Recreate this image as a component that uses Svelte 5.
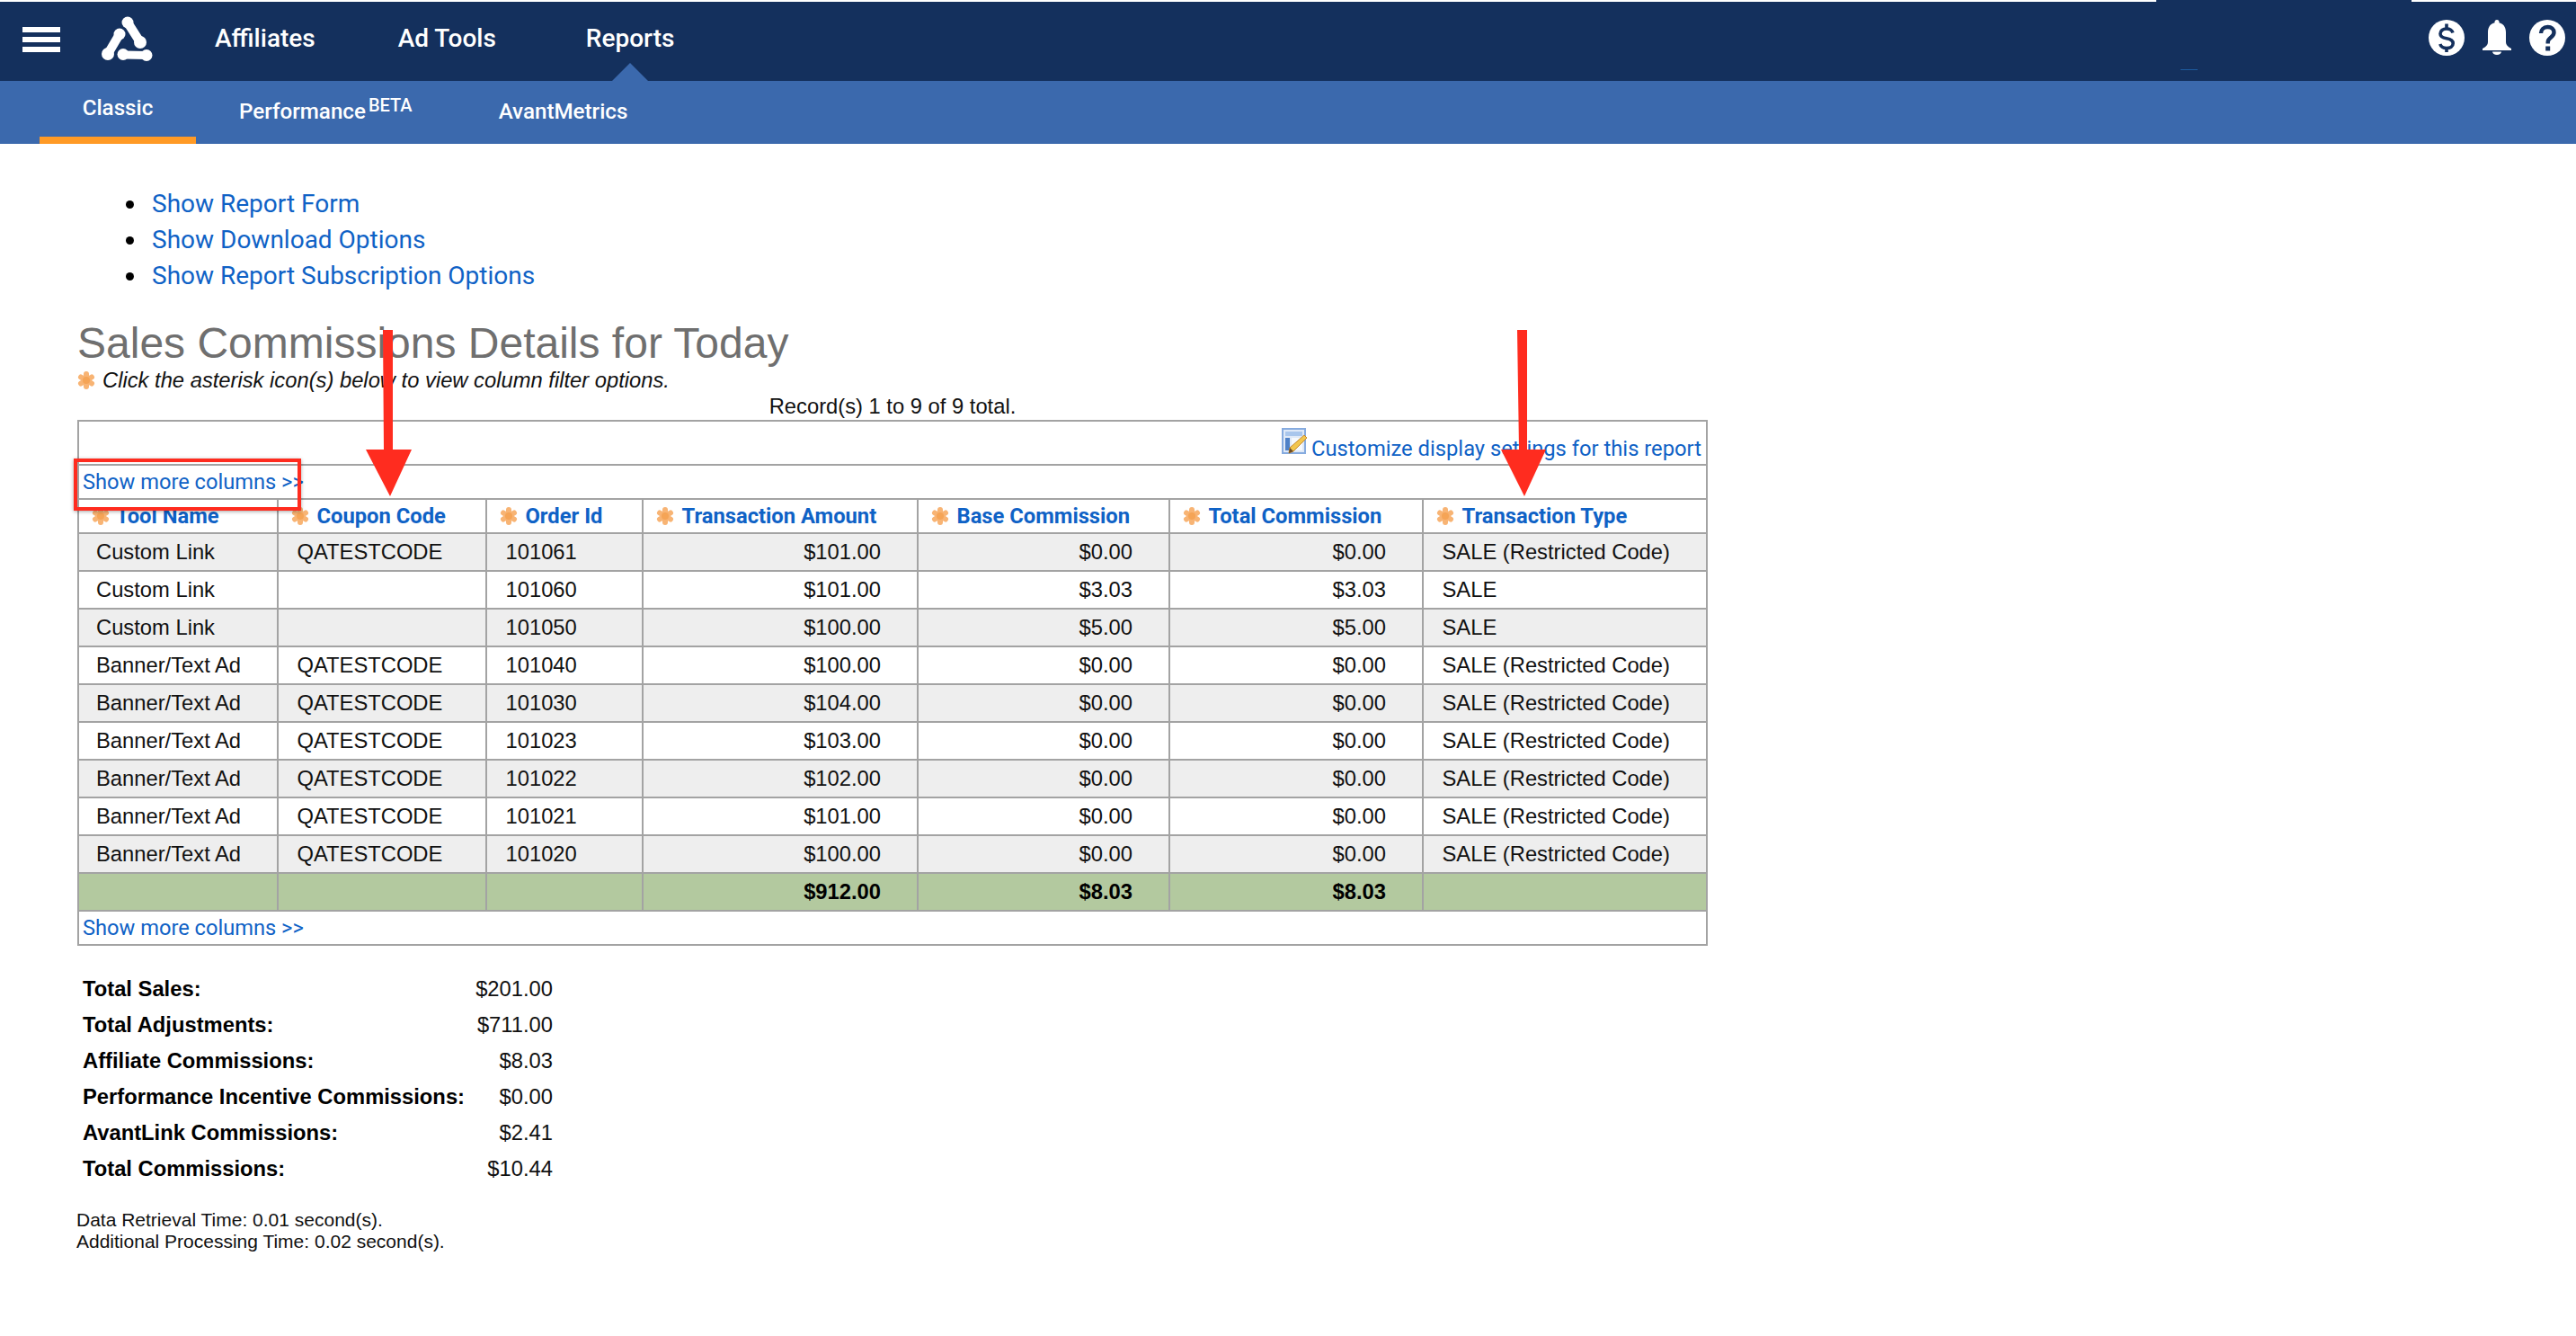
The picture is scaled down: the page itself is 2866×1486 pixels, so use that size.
<script>
  const columns = ['Tool Name', 'Coupon Code', 'Order Id', 'Transaction Amount', 'Base Commission', 'Total Commission', 'Transaction Type'];
  const widths = [222, 232, 174, 306, 280, 282, 316];
  const R = 'SALE (Restricted Code)';
  const rows = [
    ['Custom Link', 'QATESTCODE', '101061', '$101.00', '$0.00', '$0.00', R],
    ['Custom Link', '', '101060', '$101.00', '$3.03', '$3.03', 'SALE'],
    ['Custom Link', '', '101050', '$100.00', '$5.00', '$5.00', 'SALE'],
    ['Banner/Text Ad', 'QATESTCODE', '101040', '$100.00', '$0.00', '$0.00', R],
    ['Banner/Text Ad', 'QATESTCODE', '101030', '$104.00', '$0.00', '$0.00', R],
    ['Banner/Text Ad', 'QATESTCODE', '101023', '$103.00', '$0.00', '$0.00', R],
    ['Banner/Text Ad', 'QATESTCODE', '101022', '$102.00', '$0.00', '$0.00', R],
    ['Banner/Text Ad', 'QATESTCODE', '101021', '$101.00', '$0.00', '$0.00', R],
    ['Banner/Text Ad', 'QATESTCODE', '101020', '$100.00', '$0.00', '$0.00', R]
  ];
  const summary = [
    ['Total Sales:', '$201.00'],
    ['Total Adjustments:', '$711.00'],
    ['Affiliate Commissions:', '$8.03'],
    ['Performance Incentive Commissions:', '$0.00'],
    ['AvantLink Commissions:', '$2.41'],
    ['Total Commissions:', '$10.44']
  ];
  const isNum = (i) => i >= 3 && i <= 5;
</script>

{#snippet star()}
  <svg class="star" viewBox="0 0 20 20" aria-hidden="true">
    <g stroke="#f8b474" stroke-width="6" stroke-linecap="round">
      <line x1="10" y1="3" x2="10" y2="17" />
      <line x1="4" y1="6.500" x2="16" y2="13.500" />
      <line x1="4" y1="13.500" x2="16" y2="6.500" />
    </g>
    <circle cx="10" cy="10" r="4" fill="#f5a456" />
  </svg>
{/snippet}

<div class="page">
  <header class="top">
    <span class="notch"></span>
    <span class="speck"></span>
    <div class="burger"><span></span><span></span><span></span></div>
    <svg class="logo" viewBox="0 0 57 50" aria-hidden="true">
      <g fill="#fff" stroke="#fff" stroke-linecap="round">
        <line x1="29" y1="7" x2="43" y2="29" stroke-width="10" />
        <circle cx="29" cy="7" r="6.500" stroke="none" />
        <circle cx="43" cy="29" r="7" stroke="none" />
        <line x1="20" y1="20" x2="7" y2="42" stroke-width="10" />
        <circle cx="20" cy="20" r="6.500" stroke="none" />
        <circle cx="7" cy="42" r="7" stroke="none" />
        <line x1="25" y1="43" x2="50" y2="43.500" stroke-width="9" />
        <circle cx="24" cy="42.500" r="6.500" stroke="none" />
        <circle cx="50" cy="43.500" r="6.500" stroke="none" />
      </g>
    </svg>
    <nav class="main-nav">
      <span class="nav-item">Affiliates</span>
      <span class="nav-item">Ad Tools</span>
      <span class="nav-item current">Reports</span>
    </nav>
    <div class="tools">
      <svg class="tool" viewBox="0 0 40 40" aria-hidden="true">
        <circle cx="20" cy="20" r="20" fill="#fff" />
        <path d="M27 14.500c-1-3-4-4.500-7-4.500-4 0-7 2-7 5.500 0 4 4 4.800 7 5.300 3 .5 7.200 1.500 7.200 5.400 0 3.500-3.200 5.300-7.200 5.300-3 0-6.200-1.300-7.200-4.500" fill="none" stroke="#14305d" stroke-width="3.600" />
        <path d="M20 4.500v6M20 30v6" stroke="#14305d" stroke-width="3.600" />
      </svg>
      <svg class="tool bell" viewBox="0 0 32 39" aria-hidden="true">
        <circle cx="16" cy="2.500" r="2.500" fill="#fff" />
        <path d="M16 3C9 3 6 8 6 14V25Q6 29 0 32V34H32V32Q26 29 26 25V14C26 8 23 3 16 3Z" fill="#fff" />
        <path d="M11 35.500H21A5 3.500 0 0 1 11 35.500Z" fill="#fff" />
      </svg>
      <svg class="tool" viewBox="0 0 40 40" aria-hidden="true">
        <circle cx="20" cy="20" r="20" fill="#fff" />
        <path d="M13 15c0-4 3-7 7.500-7 4.200 0 7 2.500 7 6 0 3-1.800 4.300-3.600 5.800-2 1.600-3.200 2.700-3.200 5.200v1.500" fill="none" stroke="#14305d" stroke-width="4.400" />
        <rect x="18.200" y="29.500" width="5" height="5" fill="#14305d" />
      </svg>
    </div>
  </header>

  <div class="sub">
    <span class="tab active">Classic</span>
    <span class="tab perf">Performance<sup>BETA</sup></span>
    <span class="tab metrics">AvantMetrics</span>
  </div>

  <main>
    <ul>
      <li><a href="#form">Show Report Form</a></li>
      <li><a href="#download">Show Download Options</a></li>
      <li><a href="#subscribe">Show Report Subscription Options</a></li>
    </ul>

    <h1>Sales Commissions Details for Today</h1>
    <p class="note">{@render star()}<em>Click the asterisk icon(s) below to view column filter options.</em></p>
    <p class="records">Record(s) 1 to 9 of 9 total.</p>

    <table>
      <colgroup>
        {#each widths as w}<col style="width:{w}px" />{/each}
      </colgroup>
      <tbody>
        <tr class="bar-custom">
          <td colspan="7">
            <svg class="customize" viewBox="0 0 29 29" aria-hidden="true">
              <rect x="1" y="1" width="25" height="27" fill="#dfe9f7" stroke="#86abdf" stroke-width="2" />
              <rect x="4" y="4" width="19" height="5" fill="#a9c6ec" />
              <rect x="4" y="11" width="5" height="14" fill="#4f81c7" />
              <rect x="11" y="11" width="12" height="14" fill="#f6f9fd" />
              <path d="M25 8l3 3-15 15-5 2 1-6z" fill="#f2c64f" stroke="#c98a2d" stroke-width="1" />
              <path d="M8 28l1-6 4 4z" fill="#6b4a26" />
            </svg>
            <a href="#customize">Customize display settings for this report</a>
          </td>
        </tr>
        <tr class="bar"><td colspan="7"><a href="#more">Show more columns &gt;&gt;</a></td></tr>
        <tr class="head">
          {#each columns as c}
            <th><span class="th-in">{@render star()}<a href="#sort">{c}</a></span></th>
          {/each}
        </tr>
        {#each rows as row, r}
          <tr class="row" class:shade={r % 2 === 0}>
            {#each row as v, i}
              <td class:num={isNum(i)}>{v}</td>
            {/each}
          </tr>
        {/each}
        <tr class="row total">
          <td></td><td></td><td></td>
          <td class="num">$912.00</td><td class="num">$8.03</td><td class="num">$8.03</td>
          <td></td>
        </tr>
        <tr class="bar"><td colspan="7"><a href="#more">Show more columns &gt;&gt;</a></td></tr>
      </tbody>
    </table>

    <dl class="summary">
      {#each summary as [k, v]}
        <dt>{k}</dt><dd>{v}</dd>
      {/each}
    </dl>

    <p class="timing">Data Retrieval Time: 0.01 second(s).<br />Additional Processing Time: 0.02 second(s).</p>
  </main>

  <div class="redbox"></div>
  <svg class="marks" viewBox="0 0 2866 1486" aria-hidden="true">
    <path d="M426 367H437V500H458L434 552 407 500H427Z" fill="#ff2c1f" />
    <path d="M1688 367H1699V500H1720L1696 552 1670 500H1690Z" fill="#ff2c1f" />
  </svg>
</div>

<style>
  :global(body) { margin: 0; background: #fff; }
  .page {
    position: relative;
    min-height: 1486px;
    font-family: "Liberation Sans", Arial, sans-serif;
    font-size: 23.76px;
    color: #111;
    overflow: hidden;
  }
  a { color: #0f62c6; text-decoration: none; font-family: Roboto, sans-serif; }

  .top {
    position: relative;
    margin-top: 2px;
    height: 88px;
    background: #14305d;
    display: flex;
    align-items: flex-start;
    color: #fff;
    font-family: Roboto, sans-serif;
  }
  .notch {
    position: absolute;
    left: 2399px;
    top: -2px;
    width: 284px;
    height: 2px;
    background: #14305d;
  }
  .speck {
    position: absolute;
    left: 2426px;
    top: 75px;
    width: 19px;
    height: 1px;
    background: #1d5a9e;
  }
  .burger {
    width: 42px;
    margin: 28px 0 0 25px;
    display: flex;
    flex-direction: column;
    gap: 5px;
  }
  .burger span { height: 6px; background: #fff; }
  .logo { width: 57px; height: 50px; margin: 16px 0 0 46px; }
  .main-nav { display: flex; margin-left: 69px; }
  .nav-item {
    position: relative;
    font-size: 28px;
    font-weight: 500;
    line-height: 32px;
    padding-top: 25px;
    margin-right: 92px;
  }
  .nav-item.current { margin-left: 8px; }
  .nav-item.current::after {
    content: "";
    position: absolute;
    left: 50%;
    margin-left: -20px;
    bottom: -31px;
    border: 20px solid transparent;
    border-top: 0;
    border-bottom-color: #3b69ad;
    border-bottom-width: 20px;
  }
  .tools {
    margin-left: auto;
    display: flex;
    gap: 20px;
    padding: 20px 12px 0 0;
  }
  .tool { width: 40px; height: 40px; display: block; }
  .bell { width: 32px; height: 39px; }

  .sub {
    height: 70px;
    background: #3b69ad;
    display: flex;
    align-items: flex-start;
    padding-left: 44px;
    color: #fff;
    font-family: Roboto, sans-serif;
    font-size: 24.2px;
    font-weight: 500;
    line-height: 30px;
  }
  .tab { display: block; box-sizing: border-box; padding-top: 19px; white-space: nowrap; }
  .active {
    width: 174px;
    height: 70px;
    padding-top: 15px;
    text-align: center;
    border-bottom: 8px solid #ff9a26;
  }
  .perf { margin-left: 48px; }
  .perf sup { font-size: 20px; line-height: 0; margin-left: 3px; vertical-align: 8px; }
  .metrics { margin-left: 96px; }

  main { padding: 47px 0 0 86px; }
  ul { margin: 0; padding: 0 0 0 54px; list-style: none; font-size: 28px; line-height: 40px; }
  li { display: flex; align-items: center; gap: 20px; }
  li::before { content: ""; width: 9px; height: 9px; border-radius: 50%; background: #000; flex: none; }
  h1 {
    margin: 27px 0 0;
    font-size: 48px;
    line-height: 56px;
    font-weight: 400;
    color: #6f6f6f;
  }
  .note {
    margin: 0;
    height: 26px;
    line-height: 26px;
    font-size: 23.76px;
    display: flex;
    align-items: center;
    gap: 8px;
  }
  .records {
    margin: 3px 0 2px;
    width: 1814px;
    height: 26px;
    line-height: 26px;
    text-align: center;
  }
  .star { width: 20px; height: 20px; flex: none; display: block; }

  table {
    width: 1812px;
    table-layout: fixed;
    border-collapse: collapse;
    font-size: 23.76px;
  }
  td, th { border: 2px solid #a3a3a3; padding: 0; }
  .bar-custom td { height: 47px; text-align: right; padding-right: 5px; vertical-align: bottom; }
  .bar-custom a { font-size: 23.76px; line-height: 30px; position: relative; top: -2px; }
  .customize { width: 29px; height: 29px; margin-right: -3px; vertical-align: 4px; }
  .bar td { height: 36px; padding-left: 4px; }
  .bar a { font-size: 23.65px; line-height: 30px; }
  .head th { height: 36px; text-align: left; padding-left: 14px; }
  .th-in { display: flex; align-items: center; gap: 8.5px; }
  .head th:first-child .th-in { gap: 7px; }
  .th-in a { font-size: 23.76px; font-weight: 700; white-space: nowrap; }
  .row td { height: 40px; padding: 0 40px 0 20.5px; white-space: nowrap; }
  .row td:first-child { padding-left: 19px; }
  .row .num { text-align: right; }
  .shade td { background: #eee; }
  .total td { background: #b3c99f; font-weight: 700; color: #000; }

  .summary {
    margin: 28px 0 0;
    padding-left: 6px;
    display: grid;
    grid-template-columns: 434px 89px;
    font-size: 23.76px;
    line-height: 40px;
  }
  dt { font-weight: 700; color: #000; white-space: nowrap; }
  dd { margin: 0; text-align: right; }
  .timing { margin: 25px 0 0 -1px; font-size: 21px; line-height: 24px; }

  .redbox {
    position: absolute;
    left: 82px;
    top: 510px;
    width: 245px;
    height: 50px;
    border: 4px solid #ff2c1f;
    box-shadow: 0 1px 4px rgba(0,0,0,.35);
  }
  .marks {
    position: absolute;
    left: 0;
    top: 0;
    width: 2866px;
    height: 1486px;
    pointer-events: none;
  }
</style>
